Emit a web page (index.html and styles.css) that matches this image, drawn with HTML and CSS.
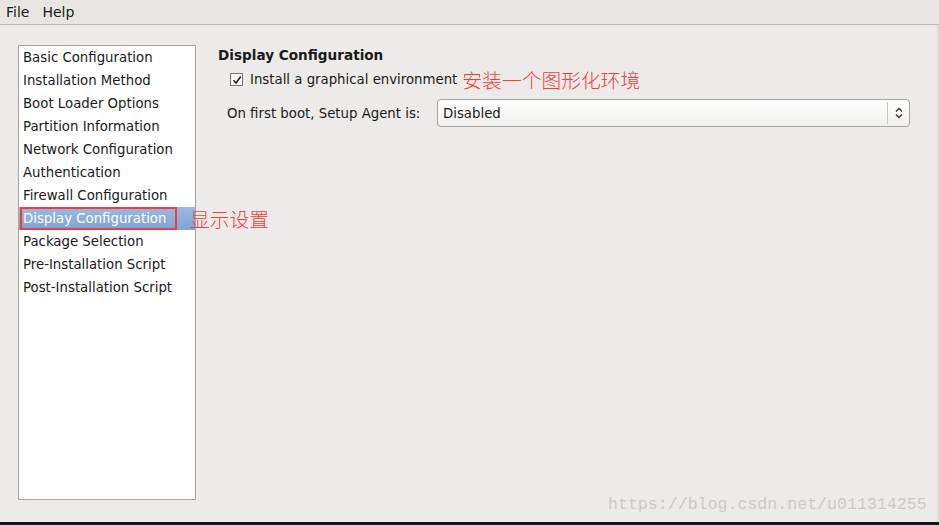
FILE: index.html
```html
<!DOCTYPE html>
<html>
<head>
<meta charset="utf-8">
<link rel="stylesheet" href="styles.css">
</head>
<body>
<div class="menubar">
  <span class="menu">File</span>
  <span class="menu">Help</span>
</div>
<div class="main">
  <div class="list">
    <div class="item">Basic Configuration</div>
    <div class="item">Installation Method</div>
    <div class="item">Boot Loader Options</div>
    <div class="item">Partition Information</div>
    <div class="item">Network Configuration</div>
    <div class="item">Authentication</div>
    <div class="item">Firewall Configuration</div>
    <div class="item selected">Display Configuration<span class="redbox"></span><span class="note note-side">显示设置</span></div>
    <div class="item">Package Selection</div>
    <div class="item">Pre-Installation Script</div>
    <div class="item">Post-Installation Script</div>
  </div>
  <div class="panel">
    <div class="heading">Display Configuration</div>
    <div class="checkrow">
      <span class="checkbox"><svg width="10" height="10" viewBox="0 0 10 10"><path d="M1.5 5.2 L4 8 L8.8 1.5" fill="none" stroke="#222" stroke-width="1.6"/></svg></span>
      <span class="checklabel">Install a graphical environment</span>
      <span class="note">安装一个图形化环境</span>
    </div>
    <div class="comborow">
      <span class="combolabel">On first boot, Setup Agent is:</span>
      <div class="combo">
        <span class="combotext">Disabled</span>
        <span class="combosep"></span>
        <span class="comboarrows"><svg width="10" height="14" viewBox="0 0 10 14"><path d="M2 5.5 L5 2.5 L8 5.5 M2 8.5 L5 11.5 L8 8.5" fill="none" stroke="#333" stroke-width="1.3"/></svg></span>
      </div>
    </div>
  </div>
  <div class="watermark">https://blog.csdn.net/u011314255</div>
</div>
<div class="bottomstrip"></div>
</body>
</html>
```
FILE: styles.css
```css
html, body {
  margin: 0;
  padding: 0;
}
body {
  width: 939px;
  height: 525px;
  background: #edebe9;
  font-family: "DejaVu Sans", sans-serif;
  font-size: 13.3px;
  color: #1a1a1a;
  display: flex;
  flex-direction: column;
  overflow: hidden;
}
.menubar {
  height: 24px;
  background: #e8e6e3;
  border-bottom: 1px solid #bdbab5;
  display: flex;
  align-items: center;
  gap: 13px;
  padding-left: 6px;
  font-size: 14px;
}
.main {
  position: relative;
  flex: 1;
  display: flex;
  padding: 20px 0 0 18px;
  gap: 22px;
  border-right: 2px solid #e1dfdc;
}
.list {
  width: 176px;
  height: 453px;
  background: #fff;
  border: 1px solid #a8a5a0;
}
.item {
  position: relative;
  height: 23px;
  line-height: 23px;
  padding-left: 4px;
  white-space: nowrap;
}
.item.selected {
  background: linear-gradient(#9ab8e0, #7fa3d4);
  color: #fff;
}
.redbox {
  position: absolute;
  left: 1px;
  top: 0;
  width: 153px;
  height: 19px;
  border: 2px solid #f23c3c;
}
.note {
  color: #f53b3b;
  font-family: "Noto Sans CJK SC", sans-serif;
  font-size: 19.8px;
  font-weight: 300;
}
.note-side {
  position: absolute;
  left: 171px;
  top: 0;
  line-height: 23px;
}
.panel {
  display: flex;
  flex-direction: column;
}
.heading {
  font-weight: bold;
  font-size: 13.6px;
  height: 21px;
  line-height: 21px;
}
.checkrow {
  display: flex;
  align-items: center;
  height: 27px;
  padding-left: 12px;
}
.checkbox {
  width: 11px;
  height: 11px;
  border: 1px solid #777;
  background: #fff;
  display: flex;
  align-items: center;
  justify-content: center;
  margin-right: 7px;
}
.checklabel {
  margin-right: 5px;
}
.comborow {
  display: flex;
  align-items: center;
  padding-left: 9px;
  margin-top: 6px;
}
.combolabel {
  width: 210px;
}
.combo {
  width: 471px;
  height: 26px;
  border: 1px solid #a6a3a0;
  border-radius: 4px;
  background: linear-gradient(#ffffff, #f2f1ef);
  display: flex;
  align-items: center;
}
.combotext {
  flex: 1;
  padding-left: 5px;
}
.combosep {
  width: 1px;
  height: 22px;
  background: #c9c6c2;
}
.comboarrows {
  width: 21px;
  display: flex;
  justify-content: center;
  align-items: center;
}
.watermark {
  position: absolute;
  left: 608px;
  top: 470px;
  font-family: "Liberation Mono", monospace;
  font-size: 16.6px;
  color: #cbc9c7;
}
.bottomstrip {
  height: 3px;
  background: #0d1428;
}
```
